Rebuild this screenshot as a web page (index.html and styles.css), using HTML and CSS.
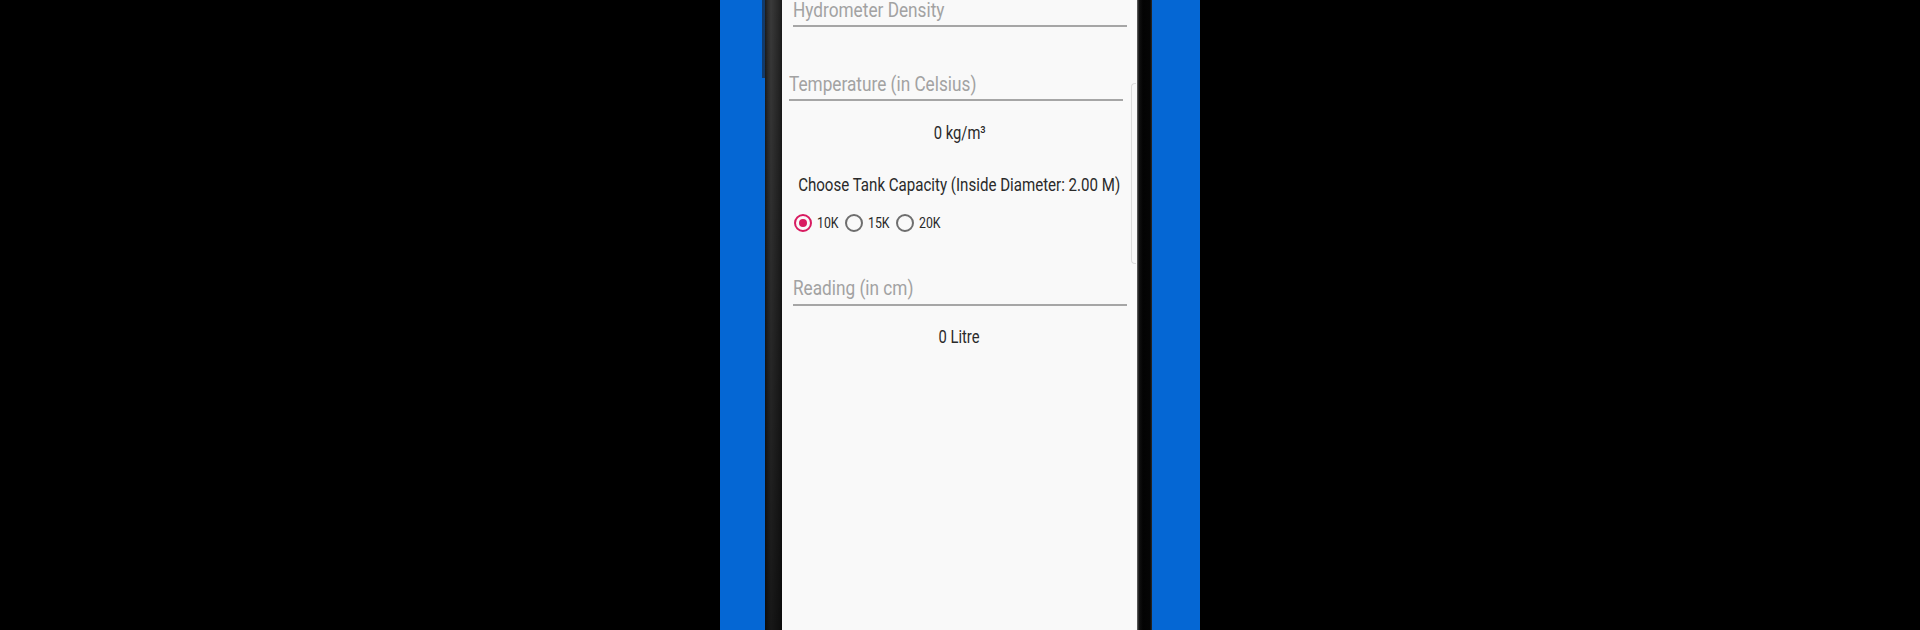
FILE: index.html
```html
<!DOCTYPE html>
<html>
<head>
<meta charset="utf-8">
<link rel="stylesheet" href="styles.css">
</head>
<body>
<div class="stage">
  <div class="device">
    <div class="side-button"></div>
    <div class="phone">
      <div class="bezel-left"></div>
      <div class="screen">
        <div class="scroll-edge"></div>
        <div class="field field-hydro"><span class="sx left">Hydrometer Density</span></div>
        <div class="field field-temp"><span class="sx left">Temperature (in Celsius)</span></div>
        <div class="result result-density"><span class="sx">0 kg/m³</span></div>
        <div class="label-tank"><span class="sx">Choose Tank Capacity (Inside Diameter: 2.00 M)</span></div>
        <div class="radios">
          <div class="radio-item"><span class="radio checked"></span><span class="sx left radio-text">10K</span></div>
          <div class="radio-item"><span class="radio"></span><span class="sx left radio-text">15K</span></div>
          <div class="radio-item"><span class="radio"></span><span class="sx left radio-text">20K</span></div>
        </div>
        <div class="field field-reading"><span class="sx left">Reading (in cm)</span></div>
        <div class="result result-litre"><span class="sx">0 Litre</span></div>
      </div>
      <div class="bezel-right"></div>
    </div>
  </div>
</div>
</body>
</html>
```
FILE: styles.css
```css
html, body {
  margin: 0;
  padding: 0;
  background: #000;
  height: 630px;
  overflow: hidden;
}

.stage {
  display: flex;
  justify-content: center;
  height: 630px;
}

.device {
  position: relative;
  width: 480px;
  height: 630px;
  background: #0567d4;
  padding: 0 48px 0 45px;
  box-sizing: border-box;
}

.side-button {
  position: absolute;
  left: 42px;
  top: 0;
  width: 3px;
  height: 78px;
  background: #123a6a;
}

.phone {
  display: flex;
  height: 630px;
}

.bezel-left {
  width: 17px;
  background: linear-gradient(to right, #1a1a1a 0, #2e2e2e 3px, #3a3a3a 6px, #262626 14px, #1a1a1a 17px);
  position: relative;
}

.bezel-left::after {
  content: "";
  position: absolute;
  inset: 0;
  background: linear-gradient(to bottom, rgba(0,0,0,0) 0, rgba(0,0,0,0.35) 60%, rgba(0,0,0,0.6) 100%);
}

.bezel-right {
  width: 15px;
  background: linear-gradient(to right, #6a6a6a 0, #111 2px, #030303 6px, #050505 13px, #2c2c2c 15px);
}

.screen {
  position: relative;
  width: 355px;
  background: #f9f9f9;
  font-family: Roboto, "Noto Sans", sans-serif;
  color: #2a2a2a;
  overflow: hidden;
}

.scroll-edge {
  position: absolute;
  right: 1px;
  top: 83px;
  width: 4px;
  height: 179px;
  border: 1px solid #dcdcdc;
  border-right: none;
  border-radius: 4px 0 0 4px;
}

.sx {
  display: inline-block;
  transform: scaleX(0.82);
  transform-origin: center;
  white-space: nowrap;
}

.sx.left {
  transform-origin: left;
}

.field {
  font-size: 21px;
  line-height: 24px;
  color: #a2a2a2;
  border-bottom: 2px solid #a6a6a6;
}

.field-hydro {
  margin: -2px 10px 0 11px;
  padding-bottom: 3px;
}

.field-temp {
  margin: 45px 14px 0 7px;
  padding-bottom: 3px;
}

.field-reading {
  margin: 42px 10px 0 11px;
  padding-bottom: 4px;
}

.result {
  display: flex;
  justify-content: center;
  font-size: 18px;
  line-height: 22px;
}

.result-density {
  margin-top: 21px;
}

.result-litre {
  margin-top: 20px;
}

.label-tank {
  display: flex;
  justify-content: center;
  margin-top: 30px;
  font-size: 18px;
  line-height: 22px;
}

.label-tank .sx {
  transform: scaleX(0.838);
}

.radios {
  display: flex;
  align-items: center;
  gap: 5px;
  margin: 16px 0 0 12px;
  height: 22px;
}

.radio-item {
  display: flex;
  align-items: center;
  gap: 5px;
}

.radio {
  width: 14px;
  height: 14px;
  border: 2px solid #6e6e6e;
  border-radius: 50%;
  position: relative;
}

.radio.checked {
  border-color: #d81b60;
}

.radio.checked::after {
  content: "";
  position: absolute;
  left: 3px;
  top: 3px;
  width: 8px;
  height: 8px;
  border-radius: 50%;
  background: #d81b60;
}

.radio-text {
  font-size: 15px;
  line-height: 18px;
  width: 23px;
}
```
